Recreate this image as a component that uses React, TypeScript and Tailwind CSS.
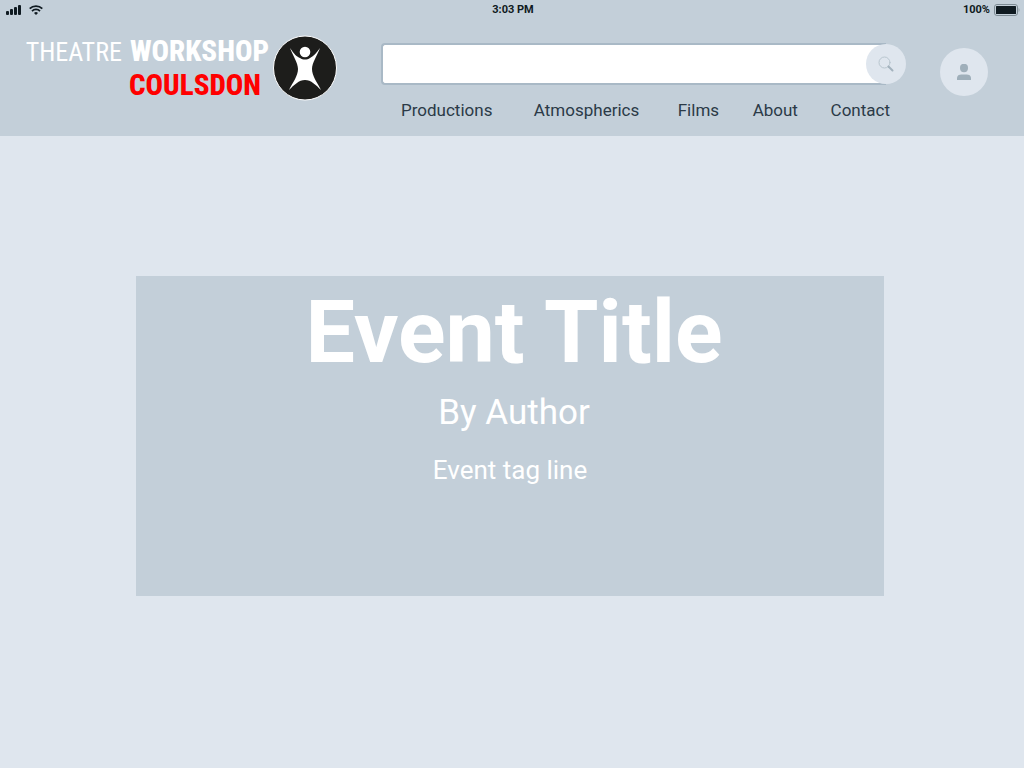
import React from "react";

const navItems = ["Productions", "Atmospherics", "Films", "About", "Contact"];

function StatusBar() {
  return (
    <div className="grid h-5 grid-cols-3 items-center pr-1 pl-1.5 text-[11px] leading-5 text-[#0f1a21]">
      <div className="flex items-center gap-2">
        <svg width="15" height="10" viewBox="0 0 15 10" fill="currentColor" aria-label="Signal">
          <rect x="0" y="6" width="3" height="4" rx="1" />
          <rect x="4" y="4" width="3" height="6" rx="1" />
          <rect x="8" y="2" width="3" height="8" rx="1" />
          <rect x="12" y="0" width="3" height="10" rx="1" />
        </svg>
        <svg width="14" height="10" viewBox="0 0 14 10" fill="none" stroke="currentColor" strokeWidth="1.8" aria-label="Wi-Fi">
          <path d="M.7 3.6a9 9 0 0 1 12.6 0" />
          <path d="M3 6.100a5.700 5.700 0 0 1 8 0" />
          <path d="M7 10 5 8a2.900 2.900 0 0 1 4 0Z" fill="currentColor" stroke="none" />
        </svg>
      </div>
      <time className="text-center font-bold">3:03 PM</time>
      <div className="flex items-center justify-end gap-1">
        <span className="font-bold">100%</span>
        <svg width="26" height="12" viewBox="0 0 26 12" aria-label="Battery">
          <rect x=".5" y=".5" width="23" height="11" rx="2.500" fill="none" stroke="#7d8b94" />
          <rect x="2" y="2" width="20" height="8" rx=".5" fill="#0f1a21" />
          <path d="M24.500 4c1.500.5 1.500 3.500 0 4Z" fill="#95a3ac" />
        </svg>
      </div>
    </div>
  );
}

function Logo() {
  return (
    <a href="#" className="flex shrink-0 items-start gap-1 pt-[15px]" aria-label="Theatre Workshop Coulsdon">
      <span className="flex w-[241px] flex-col items-end font-['Roboto_Condensed','Liberation_Sans',sans-serif] text-[29px] leading-[33px] whitespace-nowrap text-white">
        <span className="flex items-baseline gap-2">
          <span className="text-[26px]">THEATRE</span>
          <b className="font-extrabold">WORKSHOP</b>
        </span>
        <b className="pr-2 font-extrabold text-[#ff0000]">COULSDON</b>
      </span>
      <svg width="64" height="66" viewBox="0 0 64 66">
        <ellipse cx="32" cy="33" rx="31.500" ry="32" fill="#1d1d1b" stroke="#fff" />
        <circle cx="32" cy="17" r="5.300" fill="#fff" />
        <path
          d="M17 13C21 19 24 22 27 23C30 25 34 25 37 23C41 21 43 18 47 13C44 21 39 28 39 34C39 41 44 47 48 55C43 50 38 45 32 45C26 45 21 50 16 55C20 47 25 41 25 34C25 28 20 21 17 13Z"
          fill="#fff"
        />
      </svg>
    </a>
  );
}

function Search() {
  return (
    <form role="search" className="flex items-center" onSubmit={(e) => e.preventDefault()}>
      <input
        type="search"
        aria-label="Search"
        className="h-[42px] min-w-0 flex-1 rounded-l-[4px] border-2 border-r-0 border-[#a9b9c6] bg-white px-3 text-lg text-[#2b3a47] outline-none"
      />
      <button type="submit" aria-label="Submit search" className="-ml-5 flex size-10 items-center justify-center rounded-full bg-[#dfe6ee]">
        <svg width="16" height="16" viewBox="0 0 16 16" fill="none" strokeLinecap="round">
          <circle cx="6.500" cy="6.500" r="5.500" stroke="#b9c6cf" strokeWidth="1" />
          <path d="M10.500 10.500 14.500 14.500" stroke="#a3b2bd" strokeWidth="2" />
        </svg>
      </button>
    </form>
  );
}

export default function App() {
  return (
    <div className="min-h-screen bg-[#dfe6ee] font-[Roboto,sans-serif]">
      <header className="bg-[#c3cfd9]">
        <StatusBar />
        <div className="flex h-[116px] items-start pr-9 pl-7">
          <Logo />
          <div className="ml-11 min-w-0 flex-1 pt-[23px]">
            <Search />
            <nav className="grid grid-cols-[133fr_144fr_75fr_78fr_58fr] pt-3 pr-4 pl-5 text-[17px] leading-[26px] text-[#2b3a47]">
              {navItems.map((item) => (
                <a key={item} href="#">
                  {item}
                </a>
              ))}
            </nav>
          </div>
          <button aria-label="Account" className="mt-7 ml-[34px] flex size-12 shrink-0 items-center justify-center rounded-full bg-[#dfe6ee]">
            <svg width="16" height="16" viewBox="0 0 16 16" fill="#9fafba">
              <ellipse cx="8" cy="4" rx="4" ry="4.200" />
              <path d="M1 16v-2c0-2.500 2-3.500 4.500-3.500h5c2.500 0 4.500 1 4.500 3.500v2Z" />
            </svg>
          </button>
        </div>
      </header>
      <main className="pt-[140px] pr-[140px] pl-[136px]">
        <section className="min-h-80 bg-[#c3cfd9] text-center text-white">
          <div className="pt-1 pl-2">
            <h1 className="text-[88px] leading-[104px] font-bold">Event Title</h1>
            <p className="pt-2 text-[35px] leading-[42px]">By Author</p>
          </div>
          <p className="pt-[18px] text-[26px] leading-9">Event tag line</p>
        </section>
      </main>
    </div>
  );
}
